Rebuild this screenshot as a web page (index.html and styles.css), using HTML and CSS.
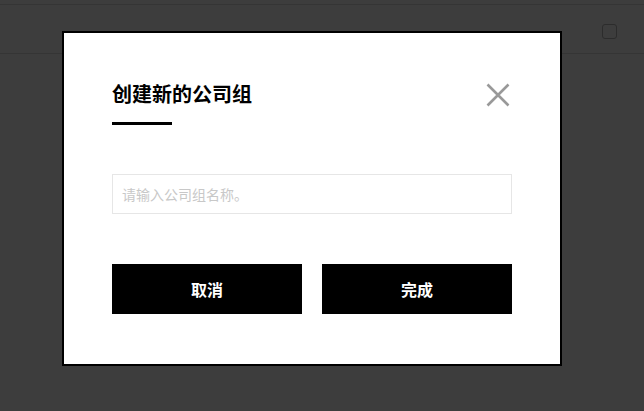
FILE: index.html
```html
<!DOCTYPE html>
<html lang="zh">
<head>
<meta charset="utf-8">
<title>创建新的公司组</title>
<link rel="stylesheet" href="styles.css">
</head>
<body>
<div class="page">
  <div class="topline"></div>
  <div class="header">
    <span class="checkbox"></span>
  </div>
</div>
<div class="modal">
  <div class="modal-head">
    <h2 class="title">创建新的公司组</h2>
    <button class="close" aria-label="关闭">
      <svg width="24" height="24" viewBox="0 0 24 24"><path d="M1.5 1.5 L22.5 22.5 M22.5 1.5 L1.5 22.5" stroke="#999" stroke-width="2.6" fill="none"/></svg>
    </button>
  </div>
  <div class="bar"></div>
  <input class="name-input" type="text" placeholder="请输入公司组名称。">
  <div class="actions">
    <button class="btn">取消</button>
    <button class="btn">完成</button>
  </div>
</div>
</body>
</html>
```
FILE: styles.css
```css
html, body {
  margin: 0;
  padding: 0;
}
body {
  width: 644px;
  height: 411px;
  overflow: hidden;
  background: #3d3d3d;
  font-family: "Noto Sans CJK SC", "Noto Sans", sans-serif;
  position: relative;
}
.page {
  display: flex;
  flex-direction: column;
}
.topline {
  height: 4px;
  border-bottom: 1px solid #353535;
}
.header {
  height: 49px;
  border-bottom: 1px solid #353535;
  display: flex;
  justify-content: flex-end;
  align-items: flex-start;
  padding-right: 27px;
  box-sizing: border-box;
}
.checkbox {
  margin-top: 19px;
  width: 15px;
  height: 15px;
  box-sizing: border-box;
  border: 1px solid #2c2c2c;
  border-radius: 3px;
}
.modal {
  position: absolute;
  left: 62px;
  top: 31px;
  width: 500px;
  height: 335px;
  box-sizing: border-box;
  border: 2px solid #000;
  background: #fff;
  padding: 46px 48px 0 48px;
  display: flex;
  flex-direction: column;
}
.modal-head {
  display: flex;
  justify-content: space-between;
  align-items: center;
  height: 30px;
}
.title {
  margin: 0;
  font-size: 20px;
  line-height: 30px;
  font-weight: 700;
  color: #000;
}
.close {
  border: 0;
  background: none;
  padding: 0;
  width: 24px;
  height: 24px;
  margin-top: 1px;
  margin-right: 2px;
  display: flex;
}
.bar {
  margin-top: 13px;
  width: 60px;
  height: 3px;
  background: #000;
}
.name-input {
  margin-top: 49px;
  width: 400px;
  height: 40px;
  box-sizing: border-box;
  border: 1px solid #e6e6e6;
  padding: 0 9px;
  font-family: "Noto Sans CJK SC", sans-serif;
  font-size: 14px;
  outline: none;
}
.name-input::placeholder {
  color: #c8c8c8;
}
.actions {
  margin-top: 50px;
  display: flex;
  gap: 20px;
}
.btn {
  width: 190px;
  height: 50px;
  border: 0;
  background: #000;
  color: #fff;
  font-family: "Noto Sans CJK SC", sans-serif;
  font-size: 16px;
  font-weight: 700;
  padding: 0;
}
```
